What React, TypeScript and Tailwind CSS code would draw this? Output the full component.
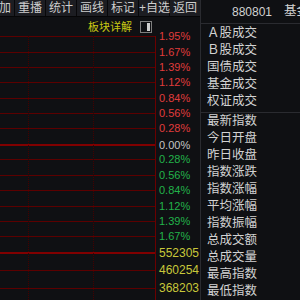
const tools = ["叠加", "重播", "统计", "画线", "标记", "+自选", "返回"];

const rows = [
  { label: "1.95%", color: "text-[#e03c3c] text-[11px]", h: "h-[16px]", line: "border-t border-[#5c0000]", shift: "-translate-y-[7px]" },
  { label: "1.67%", color: "text-[#e03c3c] text-[11px]", h: "h-[15px]", line: "border-t border-[#5c0000]", shift: "-translate-y-[7px]" },
  { label: "1.39%", color: "text-[#e03c3c] text-[11px]", h: "h-[15px]", line: "border-t border-[#5c0000]", shift: "-translate-y-[7px]" },
  { label: "1.12%", color: "text-[#e03c3c] text-[11px]", h: "h-[16px]", line: "border-t border-[#5c0000]", shift: "-translate-y-[7px]" },
  { label: "0.84%", color: "text-[#e03c3c] text-[11px]", h: "h-[15px]", line: "border-t border-[#5c0000]", shift: "-translate-y-[7px]" },
  { label: "0.56%", color: "text-[#e03c3c] text-[11px]", h: "h-[15px]", line: "border-t border-[#5c0000]", shift: "-translate-y-[7px]" },
  { label: "0.28%", color: "text-[#e03c3c] text-[11px]", h: "h-[16px]", line: "border-t border-[#5c0000]", shift: "-translate-y-[7px]" },
  { label: "0.00%", color: "text-[#c4c4c4] text-[11px]", h: "h-[15px]", line: "border-t-2 border-[#800000]", shift: "-translate-y-[6px]" },
  { label: "0.28%", color: "text-[#22b24a] text-[11px]", h: "h-[16px]", line: "border-t border-[#5c0000]", shift: "-translate-y-[7px]" },
  { label: "0.56%", color: "text-[#22b24a] text-[11px]", h: "h-[15px]", line: "border-t border-[#5c0000]", shift: "-translate-y-[7px]" },
  { label: "0.84%", color: "text-[#22b24a] text-[11px]", h: "h-[16px]", line: "border-t border-[#5c0000]", shift: "-translate-y-[7px]" },
  { label: "1.12%", color: "text-[#22b24a] text-[11px]", h: "h-[15px]", line: "border-t border-[#5c0000]", shift: "-translate-y-[7px]" },
  { label: "1.39%", color: "text-[#22b24a] text-[11px]", h: "h-[15px]", line: "border-t border-[#5c0000]", shift: "-translate-y-[7px]" },
  { label: "1.67%", color: "text-[#22b24a] text-[11px]", h: "h-[16px]", line: "border-t border-[#5c0000]", shift: "-translate-y-[7px]" },
  { label: "552305", color: "text-[#c8c83a] text-[12px]", h: "h-[18px]", line: "border-t-2 border-[#800000]", shift: "-translate-y-[6px]" },
  { label: "460254", color: "text-[#c8c83a] text-[12px]", h: "h-[18px]", line: "border-t border-[#5c0000]", shift: "-translate-y-[7px]" },
  { label: "368203", color: "text-[#c8c83a] text-[12px]", h: "h-[18px]", line: "border-t border-[#5c0000]", shift: "-translate-y-[7px]" },
];

const tradeItems = ["Ａ股成交", "Ｂ股成交", "国债成交", "基金成交", "权证成交"];
const indexItems = [
  "最新指数",
  "今日开盘",
  "昨日收盘",
  "指数涨跌",
  "指数涨幅",
  "平均涨幅",
  "指数振幅",
  "总成交额",
  "总成交量",
  "最高指数",
  "最低指数",
];

export default function App() {
  return (
    <div className="w-[300px] h-[300px] overflow-hidden bg-[#0f1013] flex font-['Liberation_Sans','Noto_Sans_CJK_SC',sans-serif]">
      {/* Left: toolbar + chart */}
      <div className="w-[200px] shrink-0 flex flex-col">
        <div className="h-[16px] shrink-0 flex justify-end gap-[1px] overflow-hidden bg-[#08080a]">
          {tools.map((t) => (
            <div
              key={t}
              className="w-[30px] shrink-0 bg-[#1c1d22] text-[#cdcdcd] text-[12px] leading-[16px] text-center whitespace-nowrap"
            >
              {t}
            </div>
          ))}
        </div>
        <div className="h-px shrink-0 bg-[#060607]" />

        {/* Chart title row */}
        <div className="h-[19px] shrink-0 flex items-center justify-end gap-[8px] pr-[48px]">
          <span className="text-[11px] leading-[12px] text-[#c8c814]">板块详解</span>
          <div className="w-[12px] h-[12px] border border-[#7e7e7e] flex justify-end p-[1px]">
            <div className="w-[3px] bg-[#cfcfcf]" />
          </div>
        </div>

        {/* Grid + axis labels */}
        <div className="relative flex-1 flex flex-col">
          {rows.map((r, i) => (
            <div key={i} className={`flex shrink-0 ${r.h}`}>
              <div className={`w-[155px] shrink-0 ${r.line}`} />
              <div className="flex-1 border-l border-[#6a0000] pl-[3px]">
                <div className={`leading-[14px] whitespace-nowrap ${r.color} ${r.shift}`}>
                  {r.label}
                </div>
              </div>
            </div>
          ))}
          <div className="absolute top-0 bottom-0 left-[28px] border-l border-dotted border-[#440000]" />
          <div className="absolute top-0 bottom-0 left-[93px] border-l border-dotted border-[#440000]" />
        </div>
      </div>

      {/* Right: info panel */}
      <div className="flex-1 border-l border-[#2a2b30] flex flex-col text-[#d2d2d2]">
        <div className="h-[24px] shrink-0 border-b border-[#2a2b30] flex items-center pl-[31px] whitespace-nowrap">
          <span className="text-[12px]">880801</span>
          <span className="ml-[12px] text-[12.5px]">基金指数</span>
        </div>
        <div className="pt-[1px] pb-[2px] border-b border-[#2a2b30]">
          {tradeItems.map((t) => (
            <div key={t} className="h-[17px] pl-[6px] text-[12.5px] leading-[17px] whitespace-nowrap">
              {t}
            </div>
          ))}
        </div>
        <div>
          {indexItems.map((t) => (
            <div key={t} className="h-[17px] pl-[6px] text-[12.5px] leading-[17px] whitespace-nowrap">
              {t}
            </div>
          ))}
        </div>
      </div>
    </div>
  );
}
